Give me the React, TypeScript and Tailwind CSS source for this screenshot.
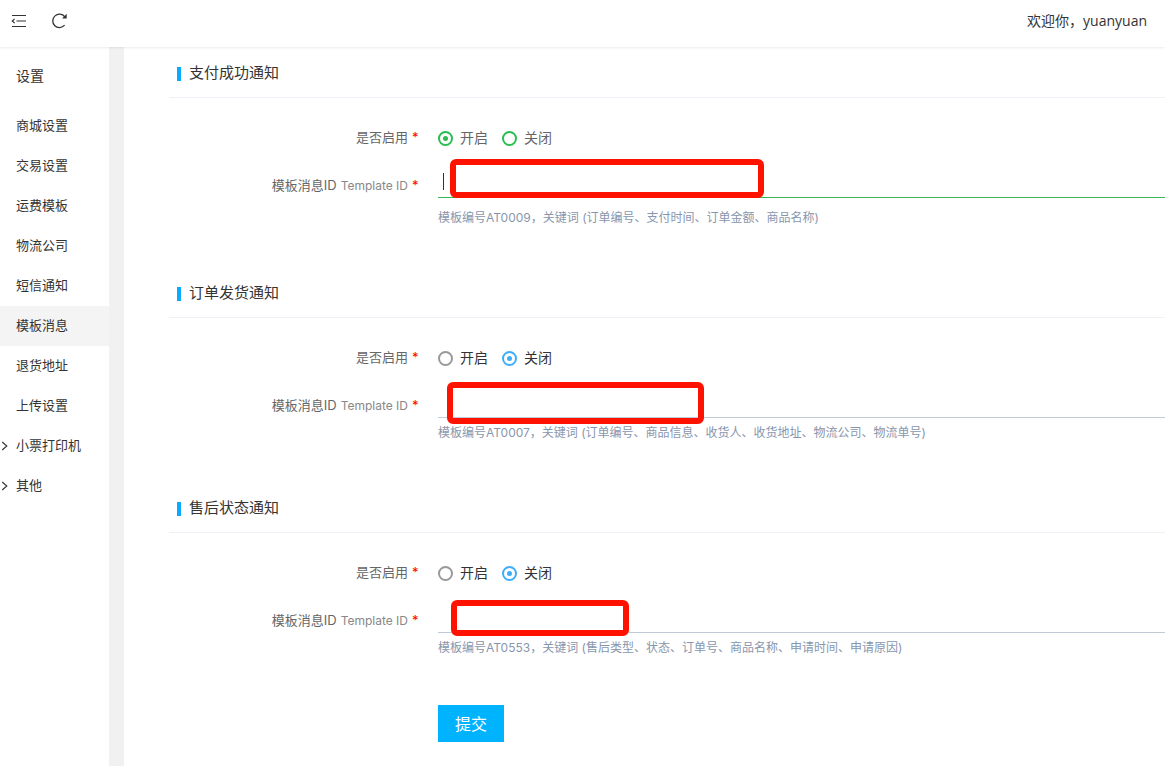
import React from "react";

type Tone = "green" | "blue";

interface Section {
  id: string;
  title: string;
  enabled: boolean;
  tone: Tone;
  focused: boolean;
  hint: string;
  rowGap: string;
  mark: string;
}

const sections: Section[] = [
  {
    id: "payment",
    title: "支付成功通知",
    enabled: true,
    tone: "green",
    focused: true,
    hint: "模板编号AT0009，关键词 (订单编号、支付时间、订单金额、商品名称)",
    rowGap: "mt-3 mb-11",
    mark: "left-3 top-0 h-[39px] w-[314px]",
  },
  {
    id: "delivery",
    title: "订单发货通知",
    enabled: false,
    tone: "blue",
    focused: false,
    hint: "模板编号AT0007，关键词 (订单编号、商品信息、收货人、收货地址、物流公司、物流单号)",
    rowGap: "mt-[7px] mb-11",
    mark: "left-[9px] top-[3px] h-[42px] w-[257px]",
  },
  {
    id: "refund",
    title: "售后状态通知",
    enabled: false,
    tone: "blue",
    focused: false,
    hint: "模板编号AT0553，关键词 (售后类型、状态、订单号、商品名称、申请时间、申请原因)",
    rowGap: "mt-[7px] mb-[49px]",
    mark: "left-[13px] top-[6px] h-[36px] w-[178px]",
  },
];

const menu = [
  { label: "商城设置" },
  { label: "交易设置" },
  { label: "运费模板" },
  { label: "物流公司" },
  { label: "短信通知" },
  { label: "模板消息", active: true },
  { label: "退货地址" },
  { label: "上传设置" },
  { label: "小票打印机", group: true },
  { label: "其他", group: true },
];

function FoldIcon() {
  return (
    <svg width="16" height="16" viewBox="0 0 16 16" fill="none" stroke="#333" strokeWidth="1.2" aria-hidden="true">
      <path d="M1 2.5h14M5.5 8H15M1 13.5h14" />
      <path d="M3.6 5.9 1.3 8l2.3 2.1" />
    </svg>
  );
}

function RefreshIcon() {
  return (
    <svg width="18" height="18" viewBox="0 0 18 18" fill="none" aria-hidden="true">
      <path d="M13.6 13.2A6.7 6.7 0 1 1 13.8 4.8" stroke="#333" strokeWidth="1.3" />
      <path d="M15.7 1.8v4.6h-4.6z" fill="#333" />
    </svg>
  );
}

function Radio({ name, label, checked, tone }: { name: string; label: string; checked: boolean; tone: Tone }) {
  const colors =
    tone === "green"
      ? "border-[#2bbd50] before:bg-[#2bbd50]"
      : "border-[#999] checked:border-[#3eaefc] before:bg-[#3eaefc]";
  return (
    <label className={`flex items-center gap-[7px] text-sm ${tone === "green" ? "text-[#666]" : "text-[#333]"}`}>
      <input
        type="radio"
        name={name}
        defaultChecked={checked}
        className={`grid size-[15px] appearance-none place-content-center rounded-full border-2 outline-none before:size-[5px] before:rounded-full before:opacity-0 before:content-[''] checked:before:opacity-100 ${colors}`}
      />
      {label}
    </label>
  );
}

function Required() {
  return <span className="ml-1 w-[6px] text-[#f00]">*</span>;
}

function NotifySection({ s }: { s: Section }) {
  const inputId = `${s.id}-template`;
  return (
    <section>
      <h2 className="flex h-12 items-center gap-2 border-b border-[#eef1f5] pl-2 text-[15px] text-[#333]">
        <span className="h-[14px] w-1 bg-[#0aaaff]" />
        {s.title}
      </h2>
      <div className="grid grid-cols-[249px_1fr] gap-x-5 pt-7">
        <div id={`${s.id}-enabled`} className="flex h-6 items-center justify-end text-[13px] text-[#666]">
          是否启用
          <Required />
        </div>
        <div role="radiogroup" aria-labelledby={`${s.id}-enabled`} className="flex h-6 items-center gap-[14px]">
          <Radio name={s.id} label="开启" checked={s.enabled} tone={s.tone} />
          <Radio name={s.id} label="关闭" checked={!s.enabled} tone={s.tone} />
        </div>
        <label htmlFor={inputId} className="mt-6 flex h-6 items-center justify-end text-[13px] text-[#666]">
          模板消息ID
          <span className="ml-1 text-xs text-[#888]">Template ID</span>
          <Required />
        </label>
        <div className="relative mt-[9px]">
          <input
            id={inputId}
            type="text"
            className={`block h-[39px] w-full border-b bg-transparent px-[5px] text-sm outline-none ${
              s.focused ? "border-[#35b558]" : "border-[#c2cad8]"
            }`}
          />
          {s.focused && <span className="absolute left-[5px] top-[14px] h-[17px] w-px bg-[#333]" />}
          <span className={`pointer-events-none absolute rounded-md border-[6px] border-[#ff1200] ${s.mark}`} />
          <p className={`text-xs leading-4 text-[#8896ad] ${s.rowGap}`}>{s.hint}</p>
        </div>
      </div>
    </section>
  );
}

export default function App() {
  return (
    <div className="flex min-h-screen flex-col overflow-x-hidden bg-white font-['Inter','Noto_Sans_CJK_SC',sans-serif] font-normal text-[#333]">
      <header className="relative flex h-[47px] shrink-0 items-center justify-between pr-[18px] pl-[11px] pb-[5px] shadow-[0_1px_2px_rgba(0,0,0,0.08)]">
        <div className="flex items-center gap-6">
          <button type="button" aria-label="收起菜单">
            <FoldIcon />
          </button>
          <button type="button" aria-label="刷新">
            <RefreshIcon />
          </button>
        </div>
        <span className="font-['Open_Sans','Noto_Sans_CJK_SC',sans-serif] text-sm">欢迎你，yuanyuan</span>
      </header>
      <div className="flex grow">
        <aside className="w-[124px] shrink-0 border-r-[15px] border-[#f1f1f1] pt-[9px]">
          <h1 className="mb-[10px] flex h-10 items-center pl-4 text-sm">设置</h1>
          <nav>
            {menu.map((m) => (
              <a
                key={m.label}
                href="#"
                className={`flex h-10 items-center text-[13px] ${m.active ? "bg-[#f4f4f4]" : ""}`}
              >
                <span className="w-4">
                  {m.group && (
                    <svg width="8" height="10" viewBox="0 0 8 10" fill="none" stroke="#333" strokeWidth="1.1" aria-hidden="true">
                      <path d="M2.2 1 6.8 5 2.2 9" />
                    </svg>
                  )}
                </span>
                {m.label}
              </a>
            ))}
          </nav>
        </aside>
        <main className="min-w-0 grow pt-[3px] pl-[45px]">
          <form onSubmit={(e: React.FormEvent) => e.preventDefault()}>
            {sections.map((s) => (
              <NotifySection key={s.id} s={s} />
            ))}
            <button type="submit" className="ml-[269px] h-[37px] w-[66px] bg-[#00b3ff] text-base text-white">
              提交
            </button>
          </form>
        </main>
      </div>
    </div>
  );
}
